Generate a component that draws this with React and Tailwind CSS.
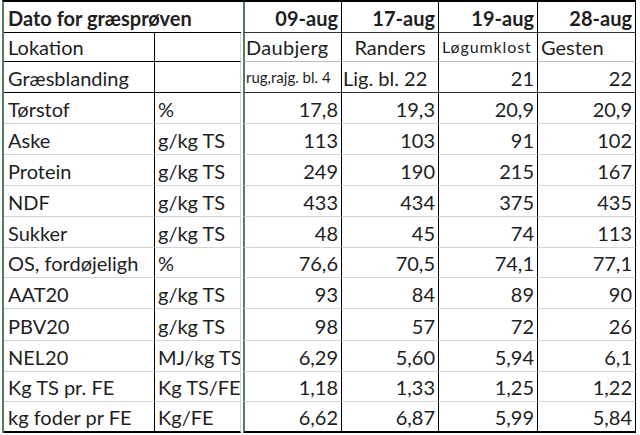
const rows = [
  { h: "h-[31px]", cells: ["Tørstof", "%", "17,8", "19,3", "20,9", "20,9"] },
  { h: "h-[31px]", cells: ["Aske", "g/kg TS", "113", "103", "91", "102"] },
  { h: "h-[31px]", cells: ["Protein", "g/kg TS", "249", "190", "215", "167"] },
  { h: "h-[31px]", cells: ["NDF", "g/kg TS", "433", "434", "375", "435"] },
  { h: "h-[31px]", cells: ["Sukker", "g/kg TS", "48", "45", "74", "113"] },
  { h: "h-[30px]", cells: ["OS, fordøjeligh", "%", "76,6", "70,5", "74,1", "77,1"] },
  { h: "h-[31px]", cells: ["AAT20", "g/kg TS", "93", "84", "89", "90"] },
  { h: "h-[32px]", cells: ["PBV20", "g/kg TS", "98", "57", "72", "26"] },
  { h: "h-[31px]", cells: ["NEL20", "MJ/kg TS", "6,29", "5,60", "5,94", "6,1"] },
  { h: "h-[30px]", cells: ["Kg TS pr. FE", "Kg TS/FE", "1,18", "1,33", "1,25", "1,22"] },
  { h: "h-[31px]", cells: ["kg foder pr FE", "Kg/FE", "6,62", "6,87", "5,99", "5,84"] },
];

const grid = "grid grid-cols-[151px_88px_99px_97px_99px_98px]";
const cell = "flex items-end whitespace-nowrap overflow-hidden pb-[2px] leading-[24px]";
const colA = "border-r border-r-black pl-[4px]";
const colB = "border-r border-r-[#d4d4d4] mr-[2px] pl-[3px]";
const colC = "border-l-2 border-l-[#4e8060] border-r border-r-black";
const colN = "border-r border-r-black";

export default function App() {
  return (
    <div className="bg-white w-[640px] h-[435px] overflow-hidden text-[20px] text-[#1e1e1e] font-['Lato',sans-serif]">
      <div className="ml-[2px] w-[634px] border-l-2 border-l-[#4e8060] border-t-2 border-t-black">
        {/* header */}
        <div className={`${grid} h-[31px]`}>
          <div className={`${cell} col-span-2 mr-[2px] pl-[4px] font-bold border-b border-b-black`}>
            Dato for græsprøven
          </div>
          {["09-aug", "17-aug", "19-aug", "28-aug"].map((d, i) => (
            <div
              key={d}
              className={`${cell} justify-end pr-[3px] font-bold border-b border-b-[#333] ${i === 0 ? colC : colN}`}
            >
              {d}
            </div>
          ))}
        </div>

        {/* Lokation */}
        <div className={`${grid} h-[29px]`}>
          <div className={`${cell} ${colA} border-b border-b-black`}>Lokation</div>
          <div className={`${cell} ${colB} border-b border-b-black`}></div>
          <div className={`${cell} ${colC} pl-[1px] tracking-[0.3px] border-b border-b-[#bdbdbd]`}>Daubjerg</div>
          <div className={`${cell} ${colN} justify-center border-b border-b-[#bdbdbd]`}>Randers</div>
          <div className={`${cell} ${colN} pl-[3px] text-[16px] tracking-[0.9px] border-b border-b-[#bdbdbd]`}>Løgumklost</div>
          <div className={`${cell} ${colN} pl-[3px] border-b border-b-[#bdbdbd]`}>Gesten</div>
        </div>

        {/* Græsblanding */}
        <div className={`${grid} h-[31px]`}>
          <div className={`${cell} ${colA} border-b border-b-black`}>Græsblanding</div>
          <div className={`${cell} ${colB} border-b border-b-black`}></div>
          <div className={`${cell} ${colC} pl-[1px] text-[15px] pb-[3px] border-b border-b-[#333]`}>rug,rajg. bl. 4</div>
          <div className={`${cell} ${colN} pl-[1px] border-b border-b-[#333]`}>Lig. bl. 22</div>
          <div className={`${cell} ${colN} justify-end pr-[3px] border-b border-b-[#333]`}>21</div>
          <div className={`${cell} ${colN} justify-end pr-[3px] border-b border-b-[#333]`}>22</div>
        </div>

        {rows.map((r, ri) => {
          const last = ri === rows.length - 1;
          const bb = last ? "border-b-2 border-b-black" : "border-b border-b-[#d4d4d4]";
          const [a, b, ...vals] = r.cells;
          return (
            <div key={a} className={`${grid} ${r.h}`}>
              <div className={`${cell} ${colA} ${bb}`}>{a}</div>
              <div className={`${cell} ${colB} ${bb}`}>{b}</div>
              {vals.map((v, i) => (
                <div key={i} className={`${cell} justify-end pr-[3px] ${i === 0 ? colC : colN} ${bb}`}>
                  {v}
                </div>
              ))}
            </div>
          );
        })}
      </div>
    </div>
  );
}
